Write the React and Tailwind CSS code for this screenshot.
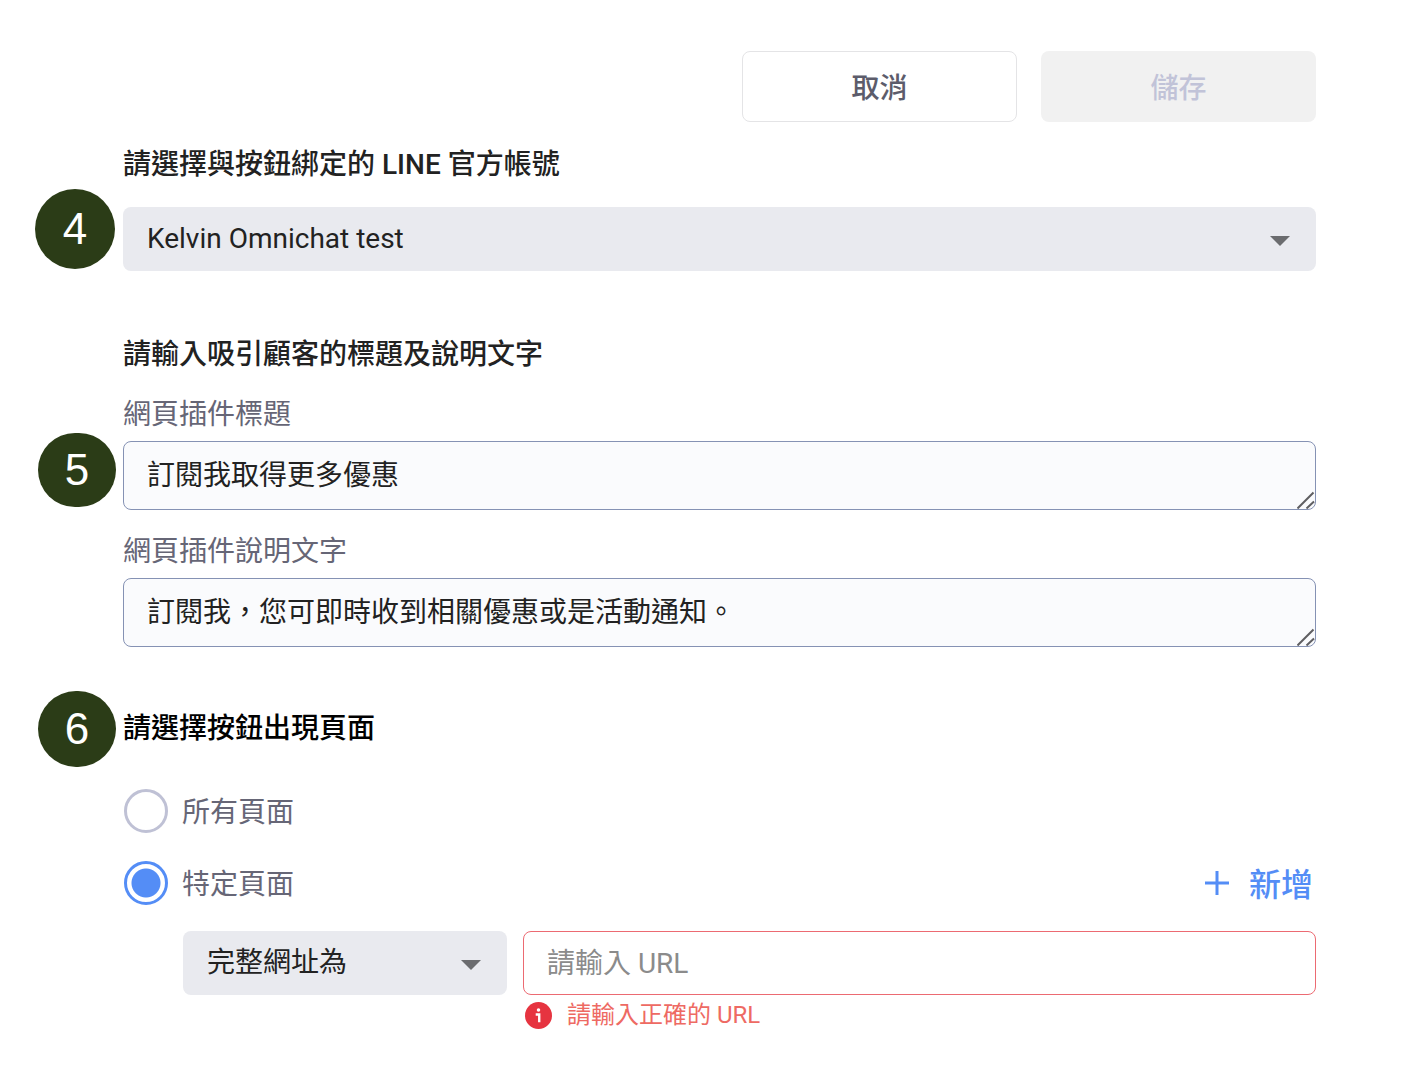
import React, { useState } from "react";

const StepBadge = ({ number, className }) => (
  <span
    className={`absolute flex items-center justify-center right-full rounded-full bg-[#2b3c17] text-white text-[44px] font-['Liberation_Sans',sans-serif] ${className}`}
  >
    {number}
  </span>
);

const SelectBox = ({ id, label, options, className }) => (
  <div className={`relative ${className}`}>
    <select
      id={id}
      aria-label={label}
      className="block w-full h-16 pl-6 pr-16 rounded-lg appearance-none bg-[#e9eaef] text-[#222222]"
    >
      {options.map((option) => (
        <option key={option}>{option}</option>
      ))}
    </select>
    <svg
      viewBox="0 0 20 10"
      className="absolute right-[26px] top-[29px] w-5 h-[10px] pointer-events-none"
    >
      <path d="M0 0h20L10 10z" fill="#6b6c6f" />
    </svg>
  </div>
);

const TextBox = ({ id, value, onChange, children }) => (
  <div className="relative mt-[6px]">
    <textarea
      id={id}
      rows={1}
      value={value}
      onChange={(e) => onChange(e.target.value)}
      className="block w-full h-[69px] px-[23px] pt-[14px] pb-3 rounded-lg border border-[#8592b4] bg-[#fafbfd] text-[#222222] resize-none overflow-hidden"
    />
    {/* resize grip */}
    <svg
      viewBox="0 0 18 18"
      className="absolute right-px bottom-px w-[18px] h-[18px] pointer-events-none"
      fill="none"
      stroke="#5f5f62"
      strokeWidth="2"
    >
      <path d="M0.5 17.5L16.5 1.5M9.5 17.5L17 10.5" />
    </svg>
    {children}
  </div>
);

const RadioOption = ({ name, label, checked, onChange }) => (
  <label className="flex items-center gap-[14px] text-[#666676]">
    <input
      type="radio"
      name={name}
      checked={checked}
      onChange={onChange}
      className="w-11 h-11 rounded-full appearance-none border-3 border-[#bfc1d5] bg-white checked:border-[#548df6] checked:bg-[radial-gradient(circle,#548df6_14px,#fff_15px)]"
    />
    <span className="pt-1">{label}</span>
  </label>
);

const App = () => {
  const [title, setTitle] = useState("訂閱我取得更多優惠");
  const [description, setDescription] = useState(
    "訂閱我，您可即時收到相關優惠或是活動通知。"
  );
  const [pages, setPages] = useState("specific");

  return (
    <main
      lang="zh-Hant"
      className="min-h-screen bg-white pt-[51px] pb-10 pl-[123px] pr-[110px] text-[28px] leading-10 text-[#222222] font-['Roboto','Noto_Sans_CJK_TC',sans-serif]"
    >
      <div className="flex justify-end gap-6">
        <button className="w-[275px] h-[71px] pt-1 rounded-lg border border-[#e4e4e6] font-medium text-[#5c5c6b]">
          取消
        </button>
        <button
          disabled
          className="w-[275px] h-[71px] pt-1 rounded-lg bg-[#f1f1f1] font-medium text-[#c1c3d8]"
        >
          儲存
        </button>
      </div>

      <section>
        <h2 className="mt-[23px] font-medium">
          請選擇與按鈕綁定的 LINE 官方帳號
        </h2>
        <div className="relative mt-[22px]">
          <SelectBox
            id="account"
            label="LINE 官方帳號"
            options={["Kelvin Omnichat test"]}
            className="w-full"
          />
          <StepBadge number={4} className="w-20 h-20 mr-2 -top-[18px]" />
        </div>
      </section>

      <section>
        <h2 className="mt-16 font-medium">請輸入吸引顧客的標題及說明文字</h2>
        <label htmlFor="title" className="block mt-5 text-[#666676]">
          網頁插件標題
        </label>
        <TextBox id="title" value={title} onChange={setTitle}>
          <StepBadge number={5} className="w-[78px] h-[74px] mr-[7px] -top-2" />
        </TextBox>
        <label htmlFor="description" className="block mt-[22px] text-[#666676]">
          網頁插件說明文字
        </label>
        <TextBox
          id="description"
          value={description}
          onChange={setDescription}
        />
      </section>

      <section>
        <div className="relative mt-[62px]">
          <h2 className="font-medium text-black">請選擇按鈕出現頁面</h2>
          <StepBadge
            number={6}
            className="w-[78px] h-[76px] mr-[7px] -top-[18px]"
          />
        </div>

        <div className="mt-10 pl-px flex flex-col items-start gap-7">
          <RadioOption
            name="pages"
            label="所有頁面"
            checked={pages === "all"}
            onChange={() => setPages("all")}
          />
          <div className="flex w-full items-center justify-between">
            <RadioOption
              name="pages"
              label="特定頁面"
              checked={pages === "specific"}
              onChange={() => setPages("specific")}
            />
            <button className="flex items-center gap-5 pr-[3px] text-[32px] font-medium text-[#548df6]">
              <svg
                viewBox="0 0 24 24"
                className="w-6 h-6"
                stroke="currentColor"
                strokeWidth="3"
              >
                <path d="M12 0v24M0 12h24" />
              </svg>
              <span className="pt-1">新增</span>
            </button>
          </div>
        </div>

        <div className="flex items-start gap-4 mt-[26px] pl-[60px]">
          <SelectBox
            id="match"
            label="網址條件"
            options={["完整網址為"]}
            className="w-[324px] shrink-0"
          />
          <div className="flex-1">
            <input
              type="text"
              aria-label="URL"
              placeholder="請輸入 URL"
              className="block w-full h-16 px-[23px] rounded-lg border border-[#ec6a72] bg-white placeholder:text-[#8b8b8b]"
            />
            <p className="flex items-center gap-[15px] pl-[2px] text-2xl leading-10 text-[#ee6a63]">
              <svg viewBox="0 0 26 26" className="w-[27px] h-[27px]">
                <circle cx="13" cy="13" r="13" fill="#e63440" />
                <circle cx="13" cy="7.8" r="1.7" fill="#fff" />
                <path
                  d="M10.3 12h3.4v7.6"
                  fill="none"
                  stroke="#fff"
                  strokeWidth="2.3"
                />
              </svg>
              請輸入正確的 URL
            </p>
          </div>
        </div>
      </section>
    </main>
  );
};

export default App;
